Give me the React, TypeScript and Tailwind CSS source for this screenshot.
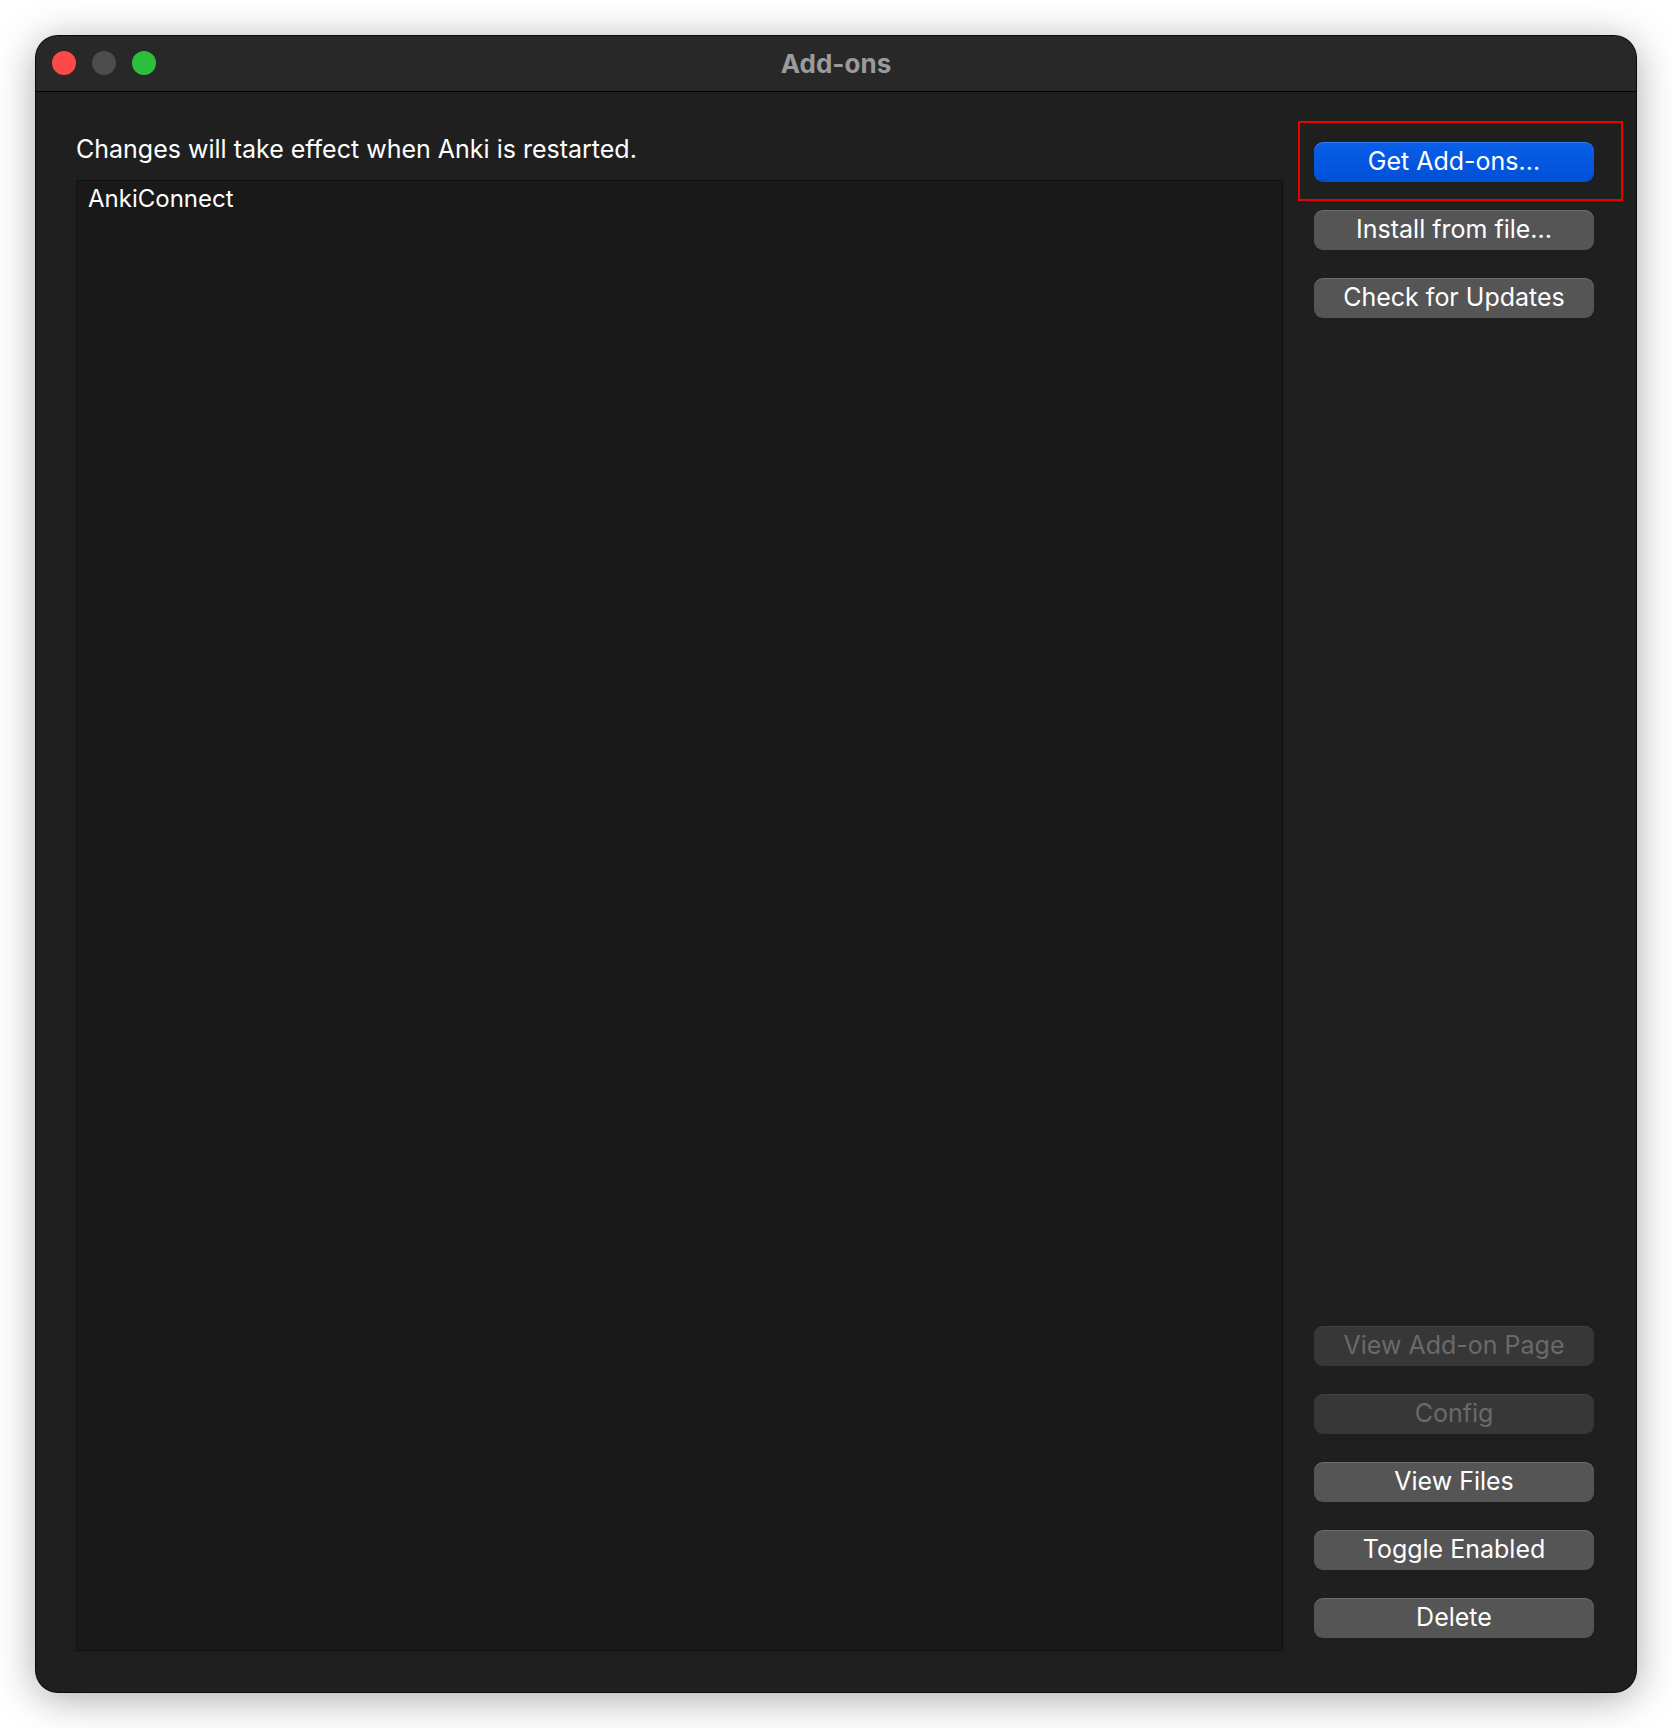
import React from "react";

const font = { fontFamily: "Inter, 'Noto Sans', 'Liberation Sans', sans-serif" };

function Btn({ label, kind = "normal" }: { label: string; kind?: "normal" | "primary" | "disabled" }) {
  const cls =
    kind === "primary"
      ? "bg-gradient-to-b from-[#0a5fe8] to-[#0050d6] text-white shadow-[inset_0_1px_0_rgba(255,255,255,0.18)]"
      : kind === "disabled"
      ? "bg-[#373737] text-[#6a6a6a] shadow-[inset_0_1px_0_rgba(255,255,255,0.06)]"
      : "bg-[#555555] text-white shadow-[inset_0_1px_0_rgba(255,255,255,0.14)]";
  return (
    <div className={`h-[40px] w-full rounded-[9px] flex items-center justify-center text-[25px] leading-none ${cls}`}>
      <span className="-mt-[1px]">{label}</span>
    </div>
  );
}

export default function App() {
  return (
    <div className="w-[1672px] h-[1728px] bg-white p-[36px]" style={font}>
      <div className="w-[1600px] h-[1656px] rounded-[22px] bg-[#1f1f1f] flex flex-col shadow-[0_6px_40px_rgba(0,0,0,0.35)] ring-1 ring-[#0a0a0a] overflow-hidden">
        <div className="h-[56px] bg-[#282828] border-b border-[#050505] relative flex items-center justify-center shrink-0">
          <div className="absolute left-[16px] top-[15px] flex gap-[16px]">
            <div className="w-[24px] h-[24px] rounded-full bg-[#fe4a46]" />
            <div className="w-[24px] h-[24px] rounded-full bg-[#4d4d4d]" />
            <div className="w-[24px] h-[24px] rounded-full bg-[#2ac03c]" />
          </div>
          <span className="text-[26px] font-bold text-[#9b9b9b] -mt-[1px]">Add-ons</span>
        </div>
        <div className="flex-1 flex flex-row pl-[40px] pr-[42px]">
          <div className="flex-1 flex flex-col pt-[42px] pb-[41px]">
            <div className="text-[25px] leading-[30px] text-white">Changes will take effect when Anki is restarted.</div>
            <div className="mt-[16px] flex-1 bg-[#191919] border border-[#101010] px-[11px] pt-[3px]">
              <div className="text-[24px] leading-[30px] text-white">AnkiConnect</div>
            </div>
          </div>
          <div className="w-[280px] ml-[31px] flex flex-col justify-between pt-[50px] pb-[54px]">
            <div className="flex flex-col gap-[28px]">
              <div className="relative">
                <Btn label="Get Add-ons..." kind="primary" />
                <div className="absolute -top-[21px] -left-[16px] -right-[29px] -bottom-[19px] border-2 border-[#ee0000]" />
              </div>
              <Btn label="Install from file..." />
              <Btn label="Check for Updates" />
            </div>
            <div className="flex flex-col gap-[28px]">
              <Btn label="View Add-on Page" kind="disabled" />
              <Btn label="Config" kind="disabled" />
              <Btn label="View Files" />
              <Btn label="Toggle Enabled" />
              <Btn label="Delete" />
            </div>
          </div>
        </div>
      </div>
    </div>
  );
}
